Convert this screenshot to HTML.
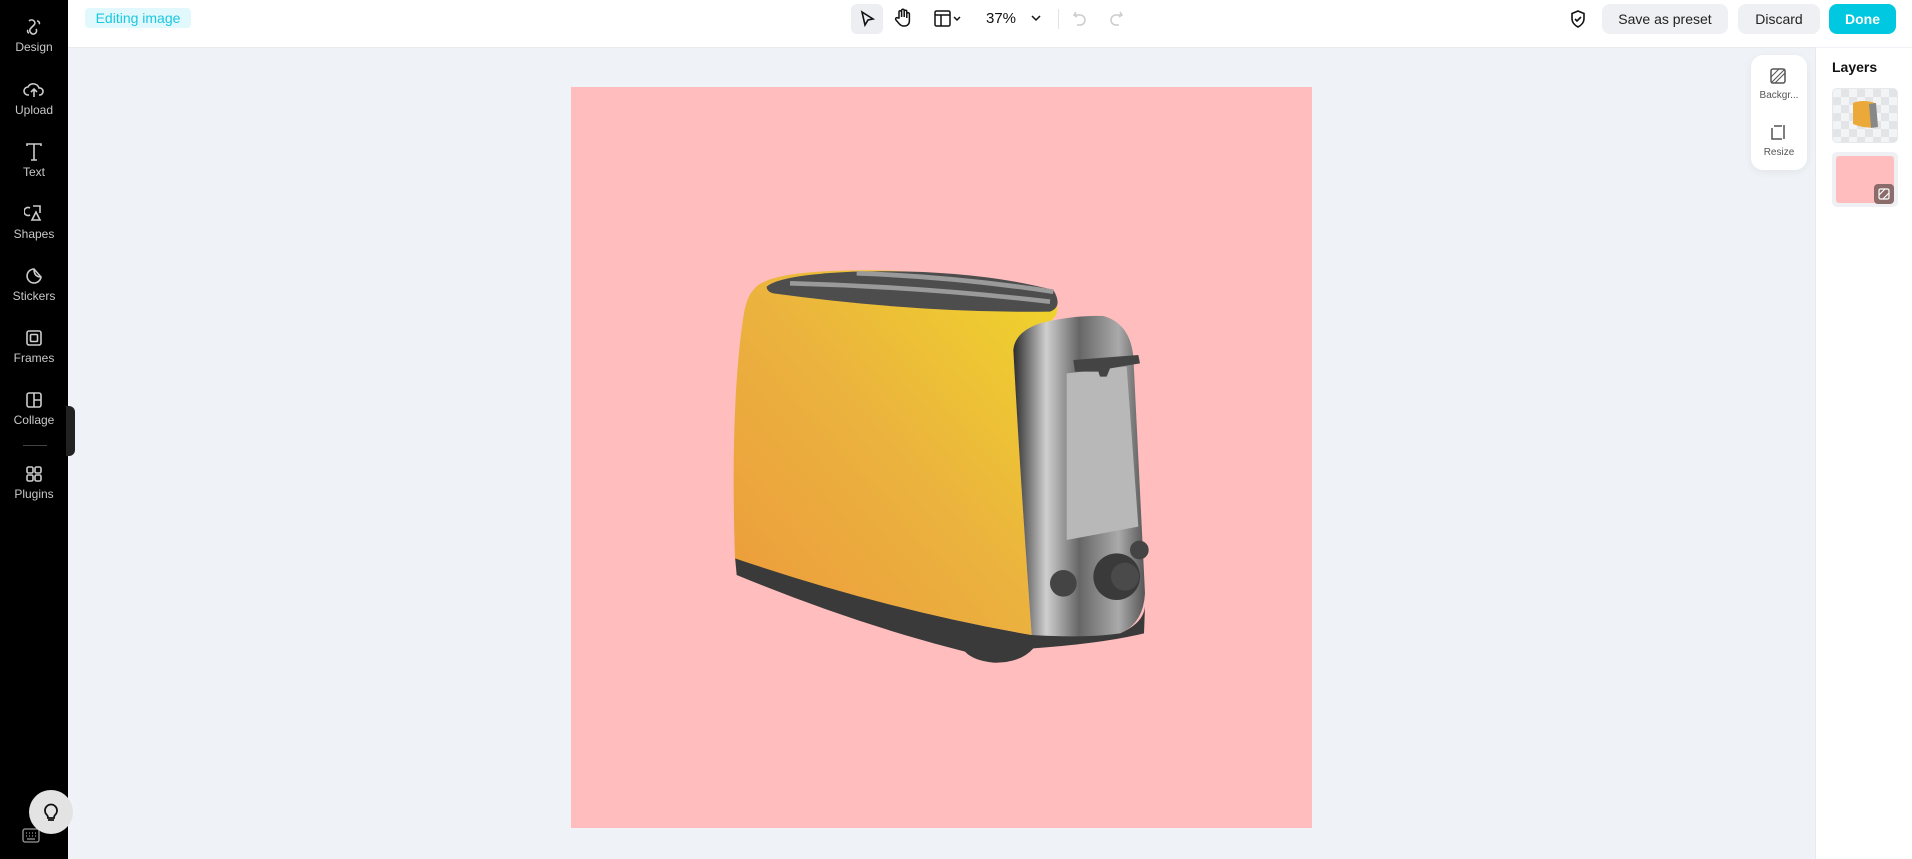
<!DOCTYPE html>
<html><head><meta charset="utf-8"><style>
*{box-sizing:border-box;margin:0;padding:0}
body{width:1912px;height:859px;overflow:hidden;background:#eff2f6;font-family:"Liberation Sans",sans-serif;position:relative}
.abs{position:absolute}
#side{left:0;top:0;width:68px;height:859px;background:#000}
.si{position:absolute;left:0;width:68px;text-align:center;color:#c8c8c8;font-size:12px}
.si svg{display:block;margin:0 auto 3px}
#top{left:68px;top:0;width:1844px;height:47px;background:#fff}
.btn{position:absolute;top:4px;height:30px;border-radius:8px;background:#eef0f3;font-size:14px;color:#222;line-height:30px;text-align:center}
</style></head><body>
<div id="side" class="abs">
 <div class="si" style="top:17px"><svg width="20" height="20" viewBox="0 0 20 20" fill="none" stroke="#ccc" stroke-width="1.6"><path d="M5 4c3-3 8 1 5 4S4 13 7 16s7-1 5-4M13 4c2 0 3 2 2 3M4 13c-1 1 0 3 1 3"/></svg>Design</div>
 <div class="si" style="top:80px"><svg width="22" height="20" viewBox="0 0 22 20" fill="none" stroke="#ccc" stroke-width="1.6"><path d="M6 15H5a4 4 0 010-8 6 6 0 0111 1 3.5 3.5 0 011 7h-1M11 17V9M8 12l3-3 3 3"/></svg>Upload</div>
 <div class="si" style="top:142px"><svg width="20" height="20" viewBox="0 0 20 20" fill="none" stroke="#ccc" stroke-width="1.6"><path d="M3 4V2h14v2M10 2v16M7 18h6"/></svg>Text</div>
 <div class="si" style="top:204px"><svg width="20" height="20" viewBox="0 0 20 20" fill="none" stroke="#ccc" stroke-width="1.6"><path d="M6 4a4 4 0 100 7M9 2h7v7M12 8l4 8H8z"/></svg>Shapes</div>
 <div class="si" style="top:266px"><svg width="20" height="20" viewBox="0 0 20 20" fill="none" stroke="#ccc" stroke-width="1.6"><path d="M17 11a7 7 0 11-7-8l7 8zM10 3c0 5 2 8 7 8"/></svg>Stickers</div>
 <div class="si" style="top:328px"><svg width="20" height="20" viewBox="0 0 20 20" fill="none" stroke="#ccc" stroke-width="1.6"><rect x="3" y="3" width="14" height="14" rx="2"/><rect x="6.5" y="6.5" width="7" height="7" rx="1"/></svg>Frames</div>
 <div class="si" style="top:390px"><svg width="20" height="20" viewBox="0 0 20 20" fill="none" stroke="#ccc" stroke-width="1.6"><rect x="3" y="3" width="14" height="14" rx="2"/><path d="M10 3v14M10 10h7"/></svg>Collage</div>
 <div class="abs" style="left:23px;top:445px;width:24px;height:1px;background:#444"></div>
 <div class="si" style="top:464px"><svg width="20" height="20" viewBox="0 0 20 20" fill="none" stroke="#ccc" stroke-width="1.6"><rect x="3" y="3" width="6" height="6" rx="1.5"/><rect x="11" y="3" width="6" height="6" rx="1.5"/><rect x="3" y="11" width="6" height="6" rx="1.5"/><rect x="11" y="11" width="6" height="6" rx="1.5"/></svg>Plugins</div>
 <svg class="abs" style="left:22px;top:828px" width="18" height="15" viewBox="0 0 18 15" fill="none" stroke="#999" stroke-width="1.3"><rect x="1" y="1" width="16" height="13" rx="2"/><path d="M4 5h1M7 5h1M10 5h1M13 5h1M4 8h1M7 8h1M10 8h1M13 8h1M5 11h8"/></svg>
</div>
<div class="abs" style="left:66px;top:406px;width:9px;height:50px;background:#222;border-radius:0 6px 6px 0"></div>
<div class="abs" style="left:29px;top:790px;width:44px;height:44px;border-radius:50%;background:#e3e3e3"><svg style="margin:11px 0 0 12px" width="20" height="22" viewBox="0 0 20 22" fill="none" stroke="#111" stroke-width="1.8"><path d="M6 14a6 6 0 118 0c-1 1-1 2-1 3H7c0-1 0-2-1-3zM7 19h6"/></svg></div>

<div id="top" class="abs">
 <div class="abs" style="left:17px;top:8px;width:106px;height:20px;border-radius:4px;background:#e1f8fc;color:#1ac8e0;font-size:14px;line-height:20px;text-align:center">Editing image</div>
 <div class="abs" style="left:783px;top:4px;width:32px;height:30px;border-radius:6px;background:#eceef2"></div>
 <svg class="abs" style="left:791px;top:10px" width="18" height="18" viewBox="0 0 18 18" fill="none" stroke="#111" stroke-width="1.6"><path d="M3 2l11 7-5 1-3 5z"/></svg>
 <svg class="abs" style="left:826px;top:8px" width="18" height="20" viewBox="0 0 18 20" fill="none" stroke="#111" stroke-width="1.5"><path d="M5 10V4a1.3 1.3 0 012.6 0v5V2.5a1.3 1.3 0 012.6 0V9V3.5a1.3 1.3 0 012.6 0V10V6a1.3 1.3 0 012.6 0v7c0 3-2 5-5 5h-1c-2 0-3-1-4-2L2 12a1.3 1.3 0 012-2z"/></svg>
 <svg class="abs" style="left:866px;top:10px" width="30" height="18" viewBox="0 0 30 18" fill="none" stroke="#111" stroke-width="1.5"><rect x="1" y="1" width="15" height="15" rx="1.5"/><path d="M1 5h15M7 5v11M20 7l3 3 3-3"/></svg>
 <div class="abs" style="left:918px;top:10px;font-size:15px;color:#111">37%</div>
 <svg class="abs" style="left:963px;top:14px" width="10" height="8" viewBox="0 0 10 8" fill="none" stroke="#111" stroke-width="1.5"><path d="M1 2l4 4 4-4"/></svg>
 <div class="abs" style="left:990px;top:9px;width:1px;height:20px;background:#e2e2e2"></div>
 <svg class="abs" style="left:1004px;top:10px" width="16" height="18" viewBox="0 0 16 18" fill="none" stroke="#ccc" stroke-width="1.5"><path d="M4 2L2 5l3 2M2 5h6a5 5 0 010 10H5"/></svg>
 <svg class="abs" style="left:1040px;top:10px" width="16" height="18" viewBox="0 0 16 18" fill="none" stroke="#ccc" stroke-width="1.5"><path d="M12 2l2 3-3 2M14 5H8a5 5 0 000 10h3"/></svg>
 <svg class="abs" style="left:1501px;top:9px" width="18" height="20" viewBox="0 0 18 20" fill="none" stroke="#111" stroke-width="1.6"><path d="M9 2l6 2.5v5c0 4-3 7-6 8.5-3-1.5-6-4.5-6-8.5v-5z"/><path d="M6 10l2 2 4-4"/></svg>
 <div class="btn" style="left:1534px;width:126px">Save as preset</div>
 <div class="btn" style="left:1670px;width:82px">Discard</div>
 <div class="btn" style="left:1761px;width:67px;background:#00c8e0;color:#fff;font-weight:bold">Done</div>
</div>
<div class="abs" style="left:68px;top:47px;width:1748px;height:1px;background:#e8eaee"></div>

<div class="abs" style="left:571px;top:87px;width:741px;height:741px;background:#ffbdbd"></div>
<svg class="abs" style="left:720px;top:240px" width="440" height="440" viewBox="0 0 1320 1320">
<defs>
<linearGradient id="y" x1="0" y1="1" x2="1" y2="0"><stop offset="0" stop-color="#ec9a3c"/><stop offset=".5" stop-color="#ebb33e"/><stop offset="1" stop-color="#f0d62a"/></linearGradient>
<linearGradient id="c" x1="0" y1="0" x2="1" y2="0"><stop offset="0" stop-color="#2b2b2b"/><stop offset=".25" stop-color="#cfcfcf"/><stop offset=".5" stop-color="#666"/><stop offset=".8" stop-color="#aaa"/><stop offset="1" stop-color="#555"/></linearGradient>
</defs>
<path d="M45 950Q500 1110 935 1185L1200 1180Q1270 1150 1275 1100L1272 1180Q1150 1210 940 1225Q900 1270 820 1268Q760 1262 735 1235Q400 1150 50 1005Z" fill="#3a3a3a"/>
<path d="M100 150Q130 105 300 95Q700 70 1010 190Q1020 240 970 250Q890 270 880 330Q900 700 935 1185Q500 1110 45 955Q30 500 70 230Q80 170 100 150Z" fill="url(#y)"/>
<path d="M140 140Q180 105 400 95Q750 85 1000 150Q1030 200 990 215Q600 220 160 160Q140 155 140 140Z" fill="#4d4d4d"/>
<path d="M210 130Q600 140 990 185" stroke="#9a9a9a" stroke-width="14" fill="none"/>
<path d="M410 100Q700 110 1000 155" stroke="#9a9a9a" stroke-width="14" fill="none"/>
<path d="M880 330Q885 275 960 250Q1060 225 1150 228Q1230 250 1240 350L1275 1060Q1270 1150 1200 1180Q1100 1195 935 1185Q900 700 880 330Z" fill="url(#c)"/>
<path d="M1040 400L1220 380L1255 860L1040 900Z" fill="#b8b8b8"/>
<path d="M1060 360L1255 345L1260 370L1170 385L1160 410L1140 410L1135 395L1065 395Z" fill="#444"/>
<circle cx="1030" cy="1030" r="40" fill="#444"/>
<circle cx="1190" cy="1010" r="70" fill="#3a3a3a"/><circle cx="1215" cy="1010" r="42" fill="#4a4a4a"/>
<circle cx="1258" cy="930" r="28" fill="#444"/>
</svg>

<div class="abs" style="left:1751px;top:55px;width:56px;height:115px;background:#fff;border-radius:12px;box-shadow:0 2px 8px rgba(0,0,0,.06)"></div>
<svg class="abs" style="left:1770px;top:68px" width="16" height="16" viewBox="0 0 16 16" fill="none" stroke="#555" stroke-width="1.5"><rect x="1" y="1" width="14" height="14" rx="2"/><path d="M1 9L9 1M5 15L15 5M1 15L15 1" stroke-width="1"/></svg>
<div class="abs" style="left:1751px;top:90px;width:56px;text-align:center;font-size:10px;color:#555">Backgr...</div>
<svg class="abs" style="left:1770px;top:124px" width="16" height="16" viewBox="0 0 16 16" fill="none" stroke="#555" stroke-width="1.5"><path d="M2 4v11h10M14 1v14M4 2h8"/></svg>
<div class="abs" style="left:1751px;top:147px;width:56px;text-align:center;font-size:10px;color:#555">Resize</div>

<div class="abs" style="left:1815px;top:48px;width:1px;height:811px;background:#e6e8ec"></div>
<div class="abs" style="left:1816px;top:48px;width:96px;height:811px;background:#fff"></div>
<div class="abs" style="left:1832px;top:59px;font-size:14px;font-weight:bold;color:#111">Layers</div>
<div class="abs" style="left:1832px;top:88px;width:66px;height:55px;border-radius:5px;background:repeating-conic-gradient(#e2e4e8 0 25%,#f3f4f6 0 50%) 0 0/16px 16px;border:1px solid #e6e8ec"></div>
<svg class="abs" style="left:1849px;top:97px" width="32" height="36" viewBox="0 0 32 36"><path d="M4 6Q14 2 26 6L28 30Q16 32 4 27Z" fill="#eba93a"/><path d="M20 7L27 6L29 30L22 31Z" fill="#888"/></svg>
<div class="abs" style="left:1832px;top:152px;width:66px;height:55px;border-radius:5px;background:#eef0f3"></div>
<div class="abs" style="left:1836px;top:156px;width:58px;height:47px;border-radius:3px;background:#ffbdbd"></div>
<div class="abs" style="left:1874px;top:184px;width:20px;height:20px;border-radius:4px;background:#8c6b6b"><svg style="margin:4px" width="12" height="12" viewBox="0 0 12 12" fill="none" stroke="#fff" stroke-width="1.2"><rect x="1" y="1" width="10" height="10" rx="1.5"/><path d="M1 7L7 1M5 11L11 5"/></svg></div>
</body></html>
